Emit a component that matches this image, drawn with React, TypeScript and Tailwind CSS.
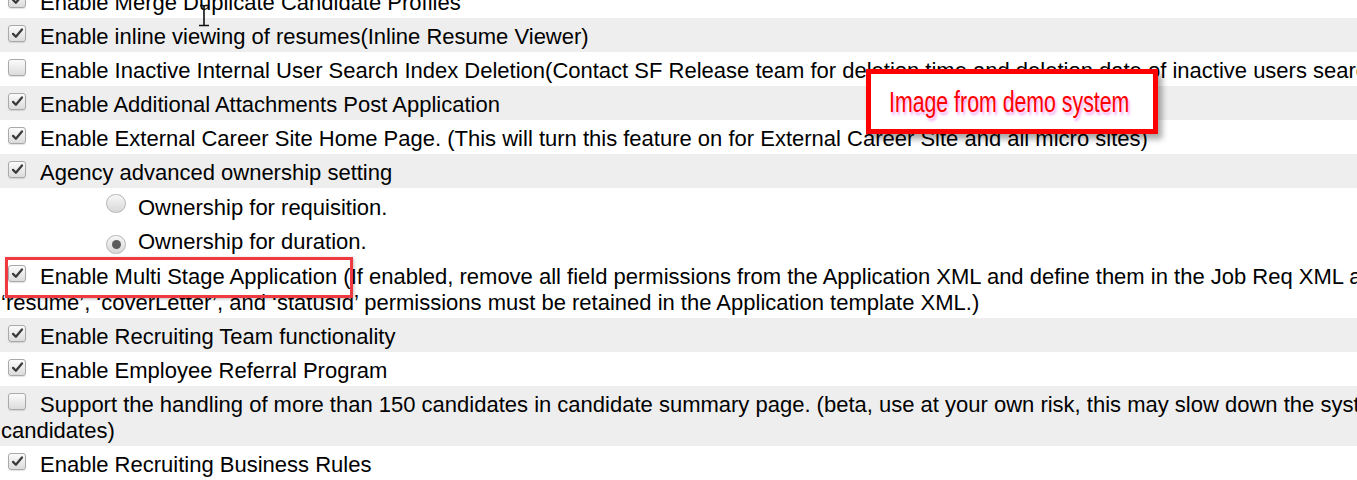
import React from "react";

type Row = {
    checked?: boolean;
    radio?: "on" | "off";
    lines: string[];
    gray?: boolean;
};

const rows: Row[] = [
    { checked: true, lines: ["Enable Merge Duplicate Candidate Profiles"] },
    { checked: true, gray: true, lines: ["Enable inline viewing of resumes(Inline Resume Viewer)"] },
    { checked: false, lines: ["Enable Inactive Internal User Search Index Deletion(Contact SF Release team for deletion time and deletion date of inactive users search index)"] },
    { checked: true, gray: true, lines: ["Enable Additional Attachments Post Application"] },
    { checked: true, lines: ["Enable External Career Site Home Page. (This will turn this feature on for External Career Site and all micro sites)"] },
    { checked: true, gray: true, lines: ["Agency advanced ownership setting"] },
    { radio: "off", lines: ["Ownership for requisition."] },
    { radio: "on", lines: ["Ownership for duration."] },
    {
        checked: true,
        lines: [
            "Enable Multi Stage Application (If enabled, remove all field permissions from the Application XML and define them in the Job Req XML and only",
            "\u2018resume\u2019, \u2018coverLetter\u2019, and \u2018statusId\u2019 permissions must be retained in the Application template XML.)",
        ],
    },
    { checked: true, gray: true, lines: ["Enable Recruiting Team functionality"] },
    { checked: true, lines: ["Enable Employee Referral Program"] },
    {
        checked: false,
        gray: true,
        lines: [
            "Support the handling of more than 150 candidates in candidate summary page. (beta, use at your own risk, this may slow down the system with many",
            "candidates)",
        ],
    },
    { checked: true, lines: ["Enable Recruiting Business Rules"] },
];

function Checkbox({ checked }: { checked: boolean }) {
    return (
        <span className="inline-block align-baseline mb-[2px] ml-[7px] mr-[14px] w-[18px] h-[17px] rounded-[3px] border border-[#a9a9a9] bg-gradient-to-b from-[#fbfbfb] to-[#dcdcdc] shadow-[0_1px_1px_rgba(0,0,0,0.12)] relative">
            {checked && (
                <svg viewBox="0 0 16 16" className="absolute left-[2px] top-[1px] w-[13px] h-[13px]">
                    <path d="M2.5 8.5 L6 12 L13.5 3" fill="none" stroke="#3a3a3a" strokeWidth="2.8" strokeLinecap="round" strokeLinejoin="round" />
                </svg>
            )}
        </span>
    );
}

function Radio({ on }: { on: boolean }) {
    return (
        <span className="inline-flex items-center justify-center align-baseline mb-[2px] ml-[105px] mr-[12px] w-[20px] h-[19px] rounded-full border border-[#b5b5b5] bg-gradient-to-b from-[#f7f7f7] to-[#d8d8d8]">
            {on && <span className="w-[9px] h-[9px] rounded-full bg-[#5c5c5c]" />}
        </span>
    );
}

export default function App() {
    return (
        <div className="relative w-[1357px] h-[480px] overflow-hidden bg-white text-black" style={{ fontFamily: '"Liberation Sans", Arial, sans-serif' }}>
            <div className="-mt-[16px] w-[1800px]">
                {rows.map((r, i) => (
                    <div key={i} className={`pt-[6px] pb-[2px] pl-[1px] text-[22px] leading-[26px] whitespace-nowrap ${r.gray ? "bg-[#eeeeee]" : "bg-white"}`}>
                        {r.radio ? <Radio on={r.radio === "on"} /> : <Checkbox checked={!!r.checked} />}
                        {r.lines.map((l, j) => (
                            <React.Fragment key={j}>
                                {j > 0 && <br />}
                                {l}
                            </React.Fragment>
                        ))}
                    </div>
                ))}
            </div>

            {/* highlight around multi stage option */}
            <div className="absolute left-[5px] top-[257px] w-[348px] h-[41px] border-[3px] border-[#f03a42] shadow-[1px_1px_3px_rgba(0,0,0,0.25)] pointer-events-none" />

            {/* annotation box */}
            <div className="absolute left-[866px] top-[69px] w-[292px] h-[65px] border-[5px] border-[#ff0000] bg-white shadow-[4px_5px_6px_rgba(0,0,0,0.35)] flex items-center pl-[18px] overflow-hidden">
                <span className="inline-block whitespace-nowrap origin-left scale-x-[0.71] text-[30px] leading-none text-[#ff0000] [text-shadow:2px_3px_3px_rgba(230,60,230,0.45)]">
                    Image from demo system
                </span>
            </div>

            {/* text cursor */}
            <svg className="absolute left-[197px] top-[4px] w-[14px] h-[23px]" viewBox="0 0 14 23">
                <path d="M7 2 V21 M3 1.5 H5.5 Q7 1.5 7 3 Q7 1.5 8.5 1.5 H11 M2 21.5 H12" fill="none" stroke="#111" strokeWidth="1.6" />
            </svg>
        </div>
    );
}
